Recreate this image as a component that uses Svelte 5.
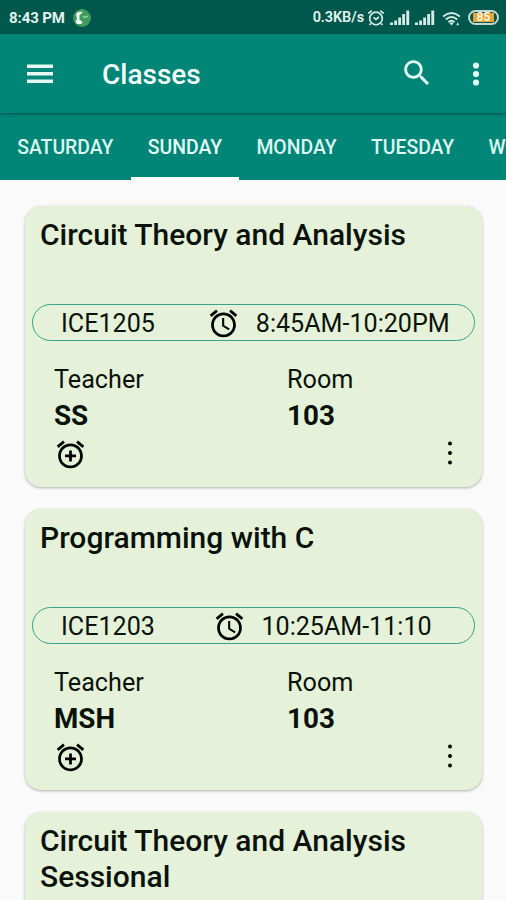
<script lang="ts">
  type ClassItem = {
    title: string;
    code: string;
    time: string;
    teacher: string;
    room: string;
  };

  const days = ["SATURDAY", "SUNDAY", "MONDAY", "TUESDAY", "WEDNESDAY"];

  const classes: ClassItem[] = [
    {
      title: "Circuit Theory and Analysis",
      code: "ICE1205",
      time: "8:45AM-10:20PM",
      teacher: "SS",
      room: "103",
    },
    {
      title: "Programming with C",
      code: "ICE1203",
      time: "10:25AM-11:10  ",
      teacher: "MSH",
      room: "103",
    },
    {
      title: "Circuit Theory and Analysis Sessional",
      code: "",
      time: "",
      teacher: "",
      room: "",
    },
  ];

  let active = $state("SUNDAY");
</script>

{#snippet alarm(inner: string)}
  <svg class="alarm" viewBox="0 0 24 24">
    <path
      d="M22 5.72l-4.6-3.86-1.29 1.53 4.6 3.86L22 5.72zM7.88 3.39L6.6 1.86 2 5.71l1.29 1.53 4.59-3.85zM12 4c-4.97 0-9 4.03-9 9s4.02 9 9 9c4.97 0 9-4.03 9-9s-4.03-9-9-9zm0 16c-3.87 0-7-3.13-7-7s3.13-7 7-7 7 3.13 7 7-3.13 7-7 7z"
    />
    <path d={inner} />
  </svg>
{/snippet}

{#snippet signal()}
  <svg class="signal" viewBox="0 0 20 15">
    <path d="M0 12.5h3V15H0zM4.2 10.500h2.800V15H4.200zM8.200 7.500h2.800V15H8.200zM12.200 4h2.800V15h-2.800zM16.300 0.500h2.900V15h-2.900z" />
  </svg>
{/snippet}

<div class="screen">
  <div class="status">
    <span class="clock">8:43 PM</span>
    <svg class="app-icon" viewBox="0 0 18 18">
      <circle cx="9" cy="9" r="9" fill="#3f9a5c" />
      <path d="M3 5 5 3l5-.5L8 5 6.500 6v5l3 1.500L8.500 15H4l-1.500-2L4 10z" fill="#eef8ef" />
      <path d="m10 7 2 1.500L15 7" fill="none" stroke="#a9dcb3" stroke-width="1.200" />
    </svg>
    <span class="speed">0.3KB/s</span>
    <svg class="status-alarm" viewBox="0 0 18 18">
      <circle cx="9" cy="9.500" r="6.300" />
      <path d="M1.300 4.500 4.800 1.700M16.700 4.500 13.200 1.700M3.800 14.500 2.500 16M14.200 14.500l1.300 1.500M6.500 8.300 9 10.500l3-2.500" />
    </svg>
    {@render signal()}
    {@render signal()}
    <svg class="wifi" viewBox="0 0 20 15">
      <path d="M1.200 5.300Q10-2 18.800 5.300M4 8.500q6-5 12 0M6.700 11.300q3.300-2.800 6.600 0" />
      <path class="fill" d="m7.700 12.200 2.300 2.600 2.300-2.600q-2.300-1.600-4.600 0zM15 14.500l1.500-3 1.500 3z" />
    </svg>
    <div class="battery"><span>85</span></div>
  </div>

  <header>
    <svg class="menu" viewBox="0 0 26 20">
      <path d="M0 0.500h26v3.500H0zM0 8h26v3.500H0zM0 15.500h26v3.500H0z" />
    </svg>
    <h1>Classes</h1>
    <svg class="search" viewBox="0 0 24 24">
      <path
        d="M15.500 14h-.79l-.28-.27C15.410 12.590 16 11.110 16 9.500 16 5.910 13.090 3 9.500 3S3 5.910 3 9.500 5.910 16 9.500 16c1.610 0 3.090-.59 4.230-1.570l.27.28v.79l5 4.990L20.490 19l-4.990-5zm-6 0C7.010 14 5 11.990 5 9.500S7.010 5 9.500 5 14 7.010 14 9.500 11.990 14 9.500 14z"
      />
    </svg>
    <svg class="more" viewBox="0 0 8 24">
      <circle cx="4" cy="3.500" r="3.100" />
      <circle cx="4" cy="12" r="3.100" />
      <circle cx="4" cy="20.500" r="3.100" />
    </svg>
  </header>

  <nav>
    {#each days as day (day)}
      <button class:active={day === active} onclick={() => (active = day)}>{day}</button>
    {/each}
  </nav>

  <main>
    {#each classes as item}
      <article>
        <h2>{item.title}</h2>
        {#if item.code}
          <div class="pill">
            <span class="code">{item.code}</span>
            <span class="time">
              {@render alarm("M12.500 8H11v6l4.750 2.850.75-1.230-4-2.370V8z")}
              <span class="range">{item.time}</span>
            </span>
          </div>
          <dl>
            <div>
              <dt>Teacher</dt>
              <dd>{item.teacher}</dd>
            </div>
            <div>
              <dt>Room</dt>
              <dd>{item.room}</dd>
            </div>
          </dl>
          <footer>
            {@render alarm("M13 9h-2v3H8v2h3v3h2v-3h3v-2h-3V9z")}
            <svg class="dots" viewBox="0 0 6 24">
              <circle cx="3" cy="2.500" r="2" />
              <circle cx="3" cy="12" r="2" />
              <circle cx="3" cy="21.500" r="2" />
            </svg>
          </footer>
        {/if}
      </article>
    {/each}
  </main>
</div>

<style>
  :global(body) {
    background: #fafafa;
  }
  .screen {
    width: 506px;
    height: 900px;
    overflow: hidden;
    display: flex;
    flex-direction: column;
    background: #fafafa;
    color: #0b120b;
    font-family: Roboto, "Liberation Sans", sans-serif;
  }
  svg {
    flex: none;
    display: block;
  }
  .status {
    flex: none;
    box-sizing: border-box;
    height: 34px;
    padding: 1px 7px 0 9px;
    display: flex;
    align-items: center;
    background: #00574b;
    color: #e4f3ef;
    fill: #d5ebe5;
    font-size: 15px;
    font-weight: 700;
  }
  .clock {
    letter-spacing: -0.1px;
  }
  .app-icon {
    width: 18px;
    height: 18px;
    margin-left: 8px;
  }
  .speed {
    margin-left: auto;
    font-size: 14.5px;
    font-weight: 600;
    letter-spacing: -0.1px;
  }
  .status-alarm {
    width: 18px;
    height: 18px;
    margin: 0 5px 0 3px;
    fill: none;
    stroke: #d5ebe5;
    stroke-width: 1.7;
  }
  .signal {
    width: 20px;
    height: 15px;
    margin-right: 5px;
  }
  .wifi {
    width: 19px;
    height: 15px;
    margin: 2px 7px 0 2px;
    fill: none;
    stroke: #d5ebe5;
    stroke-width: 2;
  }
  .wifi .fill {
    fill: #d5ebe5;
    stroke: none;
  }
  .battery {
    box-sizing: border-box;
    width: 31px;
    height: 15px;
    border: 2px solid #c4d8cf;
    border-radius: 8px;
    padding: 1px 3px;
    display: flex;
  }
  .battery span {
    flex: 1;
    background: #e9a53a;
    color: #fff3d8;
    font-size: 12px;
    line-height: 9px;
    text-align: center;
  }
  header {
    flex: none;
    box-sizing: border-box;
    height: 79px;
    padding: 0 26px 0 27px;
    display: flex;
    align-items: center;
    background: #008577;
    color: #f2fffc;
    fill: #e4faf5;
    box-shadow: 0 1px 3px rgba(0, 50, 40, 0.6);
    z-index: 1;
  }
  .menu {
    width: 26px;
    height: 20px;
  }
  h1 {
    flex: 1;
    margin: 2px 0 0 49px;
    font-size: 28px;
    font-weight: 500;
    line-height: 33px;
  }
  .search {
    width: 34px;
    height: 34px;
    margin: 0 38px 2px 0;
  }
  .more {
    width: 8px;
    height: 24px;
  }
  nav {
    flex: none;
    height: 67px;
    display: flex;
    background: #008577;
  }
  button {
    flex: none;
    box-sizing: border-box;
    height: 67px;
    padding: 5px 17.2px 0;
    border: 0;
    border-bottom: 3px solid transparent;
    background: none;
    color: #dcf6f1;
    font: 500 19.4px Roboto, "Liberation Sans", sans-serif;
  }
  button.active {
    border-bottom-color: #fff;
    color: #e6fbf7;
  }
  main {
    padding: 26px 24px 0 25px;
    display: flex;
    flex-direction: column;
    gap: 22px;
  }
  article {
    flex: none;
    box-sizing: border-box;
    height: 281px;
    padding: 11px 7px 0;
    border-radius: 16px;
    background: #e5f2d9;
    box-shadow: 0 1px 3px rgba(0, 0, 0, 0.3);
  }
  h2 {
    margin: 0 8px;
    min-height: 87px;
    font-size: 30px;
    font-weight: 500;
    line-height: 36px;
  }
  .pill {
    box-sizing: border-box;
    height: 37px;
    padding: 1px 24px 0 28px;
    display: flex;
    align-items: center;
    justify-content: space-between;
    border: 1.500px solid #35a488;
    border-radius: 19px;
    font-size: 25.1px;
  }
  .time {
    width: 243px;
    display: flex;
    align-items: center;
    justify-content: center;
  }
  .range {
    white-space: pre;
  }
  .alarm {
    width: 33px;
    height: 33px;
  }
  .time .alarm {
    margin-right: 15.5px;
  }
  dl {
    margin: 23px 0 0 22px;
    display: grid;
    grid-template-columns: 233px 1fr;
  }
  dt {
    font-size: 25.2px;
    line-height: 32px;
  }
  dd {
    margin: 2px 0 0;
    font-size: 27.8px;
    font-weight: 700;
    line-height: 36px;
  }
  footer {
    margin: 4px 22px 0 22px;
    display: flex;
    align-items: center;
    justify-content: space-between;
  }
  .dots {
    width: 6px;
    height: 24px;
    margin-bottom: 4px;
  }
</style>
